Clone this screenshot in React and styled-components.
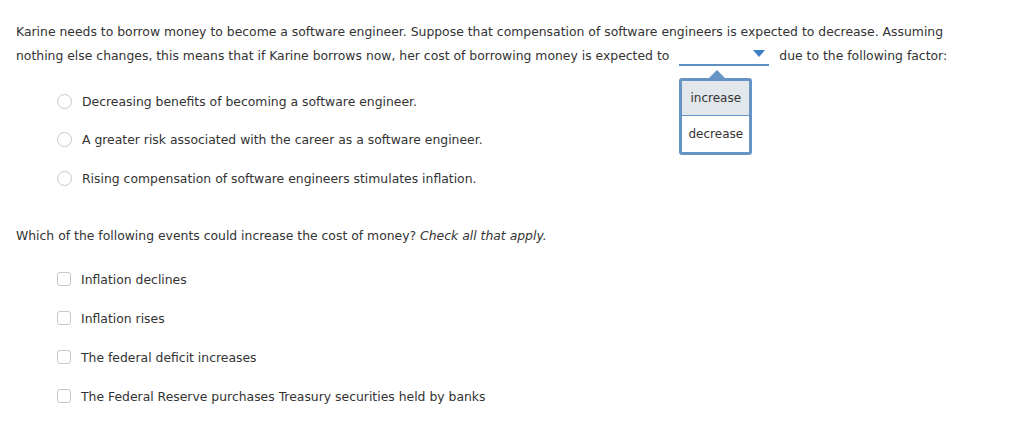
import React from "react";
import styled, { createGlobalStyle } from "styled-components";

const Global = createGlobalStyle`
  html, body { margin: 0; padding: 0; background: #fff; }
  body { font-family: "DejaVu Sans", Verdana, sans-serif; font-size: 12.4px; color: #333; }
`;

const Page = styled.div`
  padding: 20px 16px 0 16px;
`;

const Para = styled.p`
  margin: 0;
  line-height: 24px;
`;

const Dropdown = styled.span`
  position: relative;
  display: inline-block;
  width: 90px;
  height: 18px;
  margin: 0 10px;
  border-bottom: 2px solid #5f8fc0;
  vertical-align: -6px;
`;

const Arrow = styled.span`
  position: absolute;
  right: 4px;
  top: 4px;
  width: 0;
  height: 0;
  border-left: 6px solid transparent;
  border-right: 6px solid transparent;
  border-top: 7px solid #3f7fc7;
`;

const Popup = styled.div`
  position: absolute;
  left: 0;
  top: 32px;
  width: 67px;
  border: 3px solid #6694c4;
  border-radius: 3px;
  background: #fff;
  line-height: normal;
  z-index: 2;
  &::before {
    content: "";
    position: absolute;
    left: 27px;
    top: -11px;
    border-left: 8px solid transparent;
    border-right: 8px solid transparent;
    border-bottom: 8px solid #6694c4;
  }
`;

const Opt = styled.div`
  display: flex;
  align-items: center;
  justify-content: center;
  font-size: 12px;
  color: #333;
  background: ${(p) => (p.$active ? "#e1e7ea" : "#fff")};
  border-top: ${(p) => (p.$first ? "none" : "1px solid #6694c4")};
  height: ${(p) => (p.$first ? "34px" : "36px")};
`;

const List = styled.div`
  display: flex;
  flex-direction: column;
  padding-left: 41px;
  margin-top: ${(p) => p.$top}px;
  gap: ${(p) => p.$gap}px;
`;

const Item = styled.label`
  display: flex;
  align-items: center;
  gap: 10px;
  height: 16px;
  color: #333;
`;

const Radio = styled.span`
  width: 13px;
  height: 13px;
  border: 1px solid #c8c8c8;
  border-radius: 50%;
  background: #fff;
  flex: none;
`;

const Check = styled.span`
  width: 12px;
  height: 12px;
  border: 1px solid #c8c8c8;
  border-radius: 3px;
  background: #fff;
  flex: none;
`;

const Question = styled.p`
  margin: 42px 0 0 0;
  line-height: 16px;
`;

export default function App() {
  return (
    <Page>
      <Global />
      <Para>
        Karine needs to borrow money to become a software engineer. Suppose that compensation of software
        engineers is expected to decrease. Assuming
        <br />
        nothing else changes, this means that if Karine borrows now,
        her cost of borrowing money is expected to
        <Dropdown>
          <Arrow />
          <Popup>
            <Opt $first $active>increase</Opt>
            <Opt>decrease</Opt>
          </Popup>
        </Dropdown>
        due to the following factor:
      </Para>
      <List $top={25} $gap={22.5}>
        <Item><Radio />Decreasing benefits of becoming a software engineer.</Item>
        <Item><Radio />A greater risk associated with the career as a software engineer.</Item>
        <Item><Radio />Rising compensation of software engineers stimulates inflation.</Item>
      </List>
      <Question>
        Which of the following events could increase the cost of money? <i>Check all that apply.</i>
      </Question>
      <List $top={27} $gap={23}>
        <Item><Check />Inflation declines</Item>
        <Item><Check />Inflation rises</Item>
        <Item><Check />The federal deficit increases</Item>
        <Item><Check />The Federal Reserve purchases Treasury securities held by banks</Item>
      </List>
    </Page>
  );
}
